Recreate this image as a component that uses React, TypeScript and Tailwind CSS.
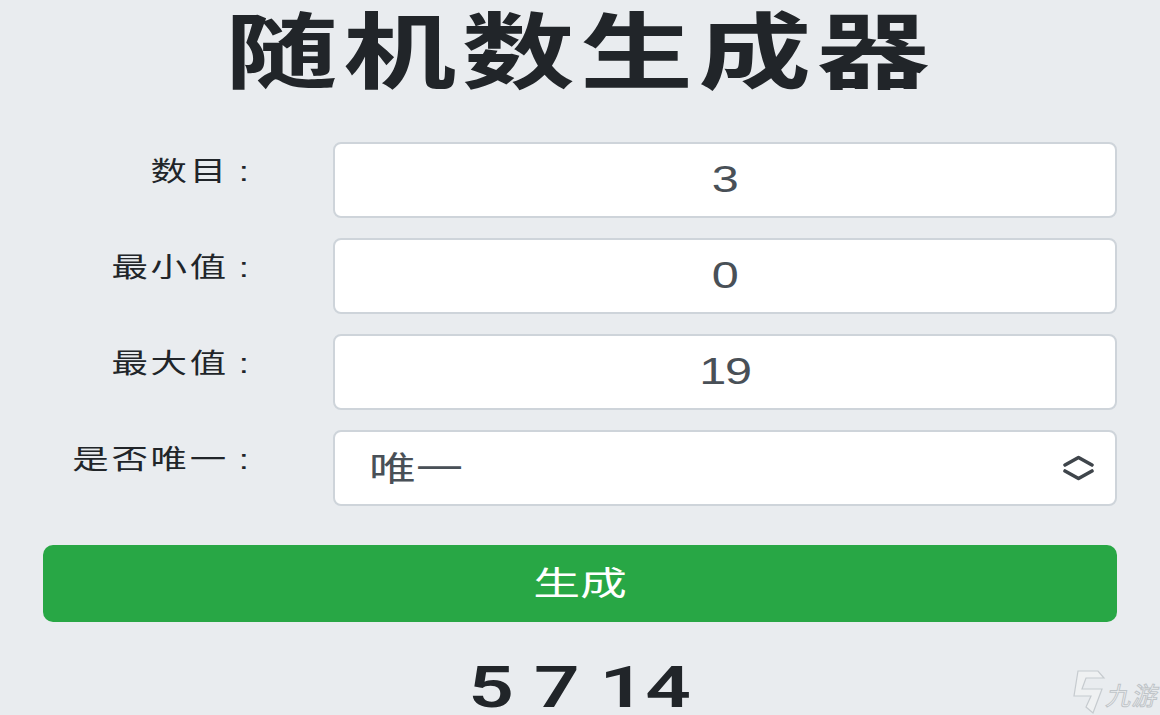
import React from 'react';

const FONT = "font-['Liberation_Sans','Noto_Sans_CJK_SC',sans-serif]";

const Field: React.FC<{ label: string; children: React.ReactNode }> = ({ label, children }) => (
  <div className="flex items-start">
    <label className="w-[221px] shrink-0 flex justify-end pt-[14px] text-[27px] leading-[32px] text-[#212529] whitespace-nowrap">
      <span className="inline-block origin-right scale-x-[1.35] tracking-[2px]">
        {label}
        <span className="inline-block w-[26px] pr-[2px] text-center">:</span>
      </span>
    </label>
    <div className="ml-[69px] flex-1">{children}</div>
  </div>
);

const NumberBox: React.FC<{ value: string }> = ({ value }) => (
  <div className="h-[76px] flex items-center justify-center rounded-[8px] border-2 border-[#ced4da] bg-white text-[36px] text-[#495057]">
    <span className="inline-block scale-x-[1.35] tracking-[-1px]">{value}</span>
  </div>
);

export default function App() {
  return (
    <div className={`relative h-[715px] w-[1160px] overflow-hidden bg-[#e9ecef] px-[43px] ${FONT}`}>
      <h1 className="flex h-[142px] justify-center pt-[12px] text-[83px] leading-none font-semibold text-[#212529] whitespace-nowrap">
        <span className="inline-block scale-x-[1.36] tracking-[4px]">随机数生成器</span>
      </h1>

      <div className="flex flex-col gap-[20px]">
        <Field label="数目">
          <NumberBox value="3" />
        </Field>
        <Field label="最小值">
          <NumberBox value="0" />
        </Field>
        <Field label="最大值">
          <NumberBox value="19" />
        </Field>
        <Field label="是否唯一">
          <div className="flex h-[76px] items-center justify-between rounded-[8px] border-2 border-[#ced4da] bg-white pl-[34px] pr-[21px] text-[34px] text-[#495057]">
            <span className="inline-block origin-left scale-x-[1.38] pt-[3px]">唯一</span>
            <svg width="31" height="26" viewBox="0 0 31 26" fill="none" stroke="#3f454b" strokeWidth="3.6" strokeLinecap="round" strokeLinejoin="round">
              <path d="M2 10 15.5 2.5 29 10" />
              <path d="M2 16 15.5 23.5 29 16" />
            </svg>
          </div>
        </Field>
      </div>

      <button className="mt-[39px] flex h-[77px] w-full items-center justify-center rounded-[10px] bg-[#28a745] text-[33px] text-white">
        <span className="inline-block scale-x-[1.42]">生成</span>
      </button>

      <div className="mt-[40px] flex h-[50px] justify-center font-['Roboto',sans-serif] text-[58px] leading-[50px] font-semibold text-[#212529]">
        <span className="inline-block scale-x-[1.38] whitespace-pre">5 7 14</span>
      </div>

      {/* watermark */}
      <div className="absolute right-[1px] bottom-[1px] flex items-end">
        <svg width="36" height="46" viewBox="0 0 36 46" fill="#eff1f2" stroke="#c6cbcf" strokeWidth="1.2">
          <path d="M7 3H27L33 10H15L11 21H31L22 45 15 39 20 28H3Z" />
        </svg>
        <span className="mb-[5px] inline-block -skew-x-12 text-[25px] leading-none tracking-[1px] text-[#f1f3f4] [-webkit-text-stroke:1px_#bfc4c8]">
          九游
        </span>
      </div>
    </div>
  );
}
